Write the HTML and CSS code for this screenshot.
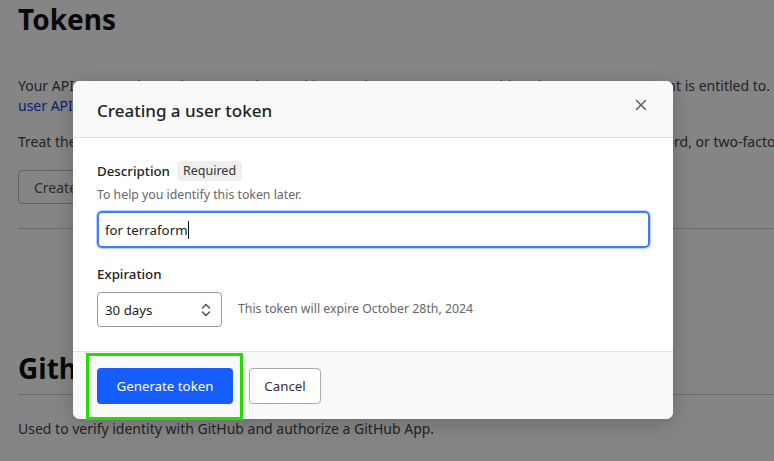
FILE: index.html
```html
<!DOCTYPE html>
<html>
<head>
<meta charset="utf-8">
<link rel="stylesheet" href="styles.css">
</head>
<body>
<main class="page">
  <h1 class="page-title">Tokens</h1>
  <p class="para">Your API access tokens give your scripts and integrations access to everything that your user account is entitled to. For more<br><a class="link" href="#">user API tokens</a>, see the documentation.</p>
  <p class="para">Treat these tokens very carefully, as you would treat any other secrets, such as your account password, or two-factor codes.</p>
  <button class="ghost-btn">Create a user token</button>
  <hr class="rule">
  <h2 class="section-title">Github Apps</h2>
  <hr class="rule rule-tight">
  <p class="para">Used to verify identity with GitHub and authorize a GitHub App.</p>
</main>

<div class="overlay"></div>

<section class="modal">
  <header class="modal-head">
    <h3 class="modal-title">Creating a user token</h3>
    <svg class="close" width="12" height="12" viewBox="0 0 12 12"><path d="M1.5 1.5 L10.5 10.5 M10.5 1.5 L1.5 10.5" stroke="#5c5c66" stroke-width="1.5" fill="none" stroke-linecap="round"/></svg>
  </header>
  <div class="modal-body">
    <div class="label-row">
      <span class="label">Description</span>
      <span class="badge">Required</span>
    </div>
    <div class="hint">To help you identify this token later.</div>
    <div class="input"><span>for terraform</span><span class="caret"></span></div>

    <div class="label exp-label">Expiration</div>
    <div class="exp-row">
      <div class="select">
        <span>30 days</span>
        <svg width="10" height="16" viewBox="0 0 10 16"><path d="M1.5 6 L5 2.5 L8.5 6 M1.5 10 L5 13.5 L8.5 10" stroke="#555" stroke-width="1.5" fill="none" stroke-linecap="round" stroke-linejoin="round"/></svg>
      </div>
      <span class="exp-text">This token will expire October 28th, 2024</span>
    </div>
  </div>
  <footer class="modal-foot">
    <button class="btn primary">Generate token</button>
    <button class="btn secondary">Cancel</button>
    <div class="highlight"></div>
  </footer>
</section>
</body>
</html>
```

FILE: styles.css
```css
* { box-sizing: border-box; }
html, body { margin: 0; padding: 0; }
body {
  width: 774px;
  height: 461px;
  overflow: hidden;
  background: #fff;
  font-family: "Noto Sans", "Open Sans", sans-serif;
  color: #222;
  position: relative;
}
.page {
  padding: 0 0 0 18px;
  white-space: nowrap;
  overflow: hidden;
  width: 774px;
  height: 461px;
}
.page-title {
  margin: 0;
  font-size: 28px;
  font-weight: 700;
  line-height: 38px;
  color: #111;
}
.para {
  margin: 0;
  font-size: 14px;
  line-height: 20px;
  color: #444;
}
.page-title + .para { margin-top: 38px; }
.para + .para { margin-top: 16px; }
.link { color: #1a3cdd; text-decoration: none; }
.ghost-btn {
  margin-top: 18px;
  height: 34px;
  padding: 0 15px;
  border: 1px solid #bbb;
  border-radius: 4px;
  background: #fff;
  color: #555;
  font: 14px "Noto Sans", sans-serif;
  display: block;
}
.rule {
  border: 0;
  border-top: 1px solid #ccc;
  margin: 24px 0 0 0;
}
.section-title {
  margin: 121px 0 0 0;
  font-size: 28px;
  line-height: 36px;
  font-weight: 700;
  color: #111;
}
.rule-tight { margin-top: 8px; }
.rule-tight + .para { margin-top: 24px; }

.overlay {
  position: absolute;
  inset: 0;
  background: rgba(0,0,0,0.48);
}

.modal {
  position: absolute;
  left: 73px;
  top: 81px;
  width: 600px;
  height: 338px;
  background: #fff;
  border-radius: 7px;
  display: flex;
  flex-direction: column;
  box-shadow: 0 4px 20px rgba(0,0,0,0.2);
}
.modal-head {
  height: 57px;
  background: #f9f9f9;
  border-bottom: 1px solid #dedede;
  border-radius: 7px 7px 0 0;
  display: flex;
  align-items: center;
  justify-content: space-between;
  padding: 0 26px 0 24px;
}
.modal-title {
  margin: 0;
  font-size: 17px;
  font-weight: 500;
  color: #222;
  padding-top: 2px;
}
.close { margin-top: -8px; }
.modal-body {
  padding: 23px 23px 0 24px;
  height: 213px;
}
.label-row {
  display: flex;
  align-items: center;
  gap: 7px;
}
.label {
  font-size: 13.3px;
  font-weight: 500;
  color: #222;
  line-height: 20px;
}
.badge {
  font-size: 12.5px;
  color: #333;
  background: #efefef;
  border-radius: 4px;
  padding: 0 6px;
  line-height: 20px;
}
.hint {
  font-size: 12.3px;
  color: #666;
  line-height: 18px;
  margin-top: 5px;
}
.input {
  margin-top: 7px;
  height: 37px;
  border: 2px solid #3d7cff;
  border-radius: 5px;
  box-shadow: 0 0 0 1px rgba(61,124,255,0.35);
  display: flex;
  align-items: center;
  padding-left: 6px;
  font-size: 13.3px;
  color: #222;
}
.caret {
  display: inline-block;
  width: 1px;
  height: 18px;
  background: #111;
}
.exp-label { margin-top: 16px; }
.exp-row {
  display: flex;
  align-items: center;
  gap: 16px;
  margin-top: 8px;
}
.select {
  width: 125px;
  height: 35px;
  border: 1px solid #999;
  border-radius: 4px;
  display: flex;
  align-items: center;
  justify-content: space-between;
  padding: 0 10px 0 7px;
  font-size: 13.3px;
  color: #222;
}
.exp-text {
  font-size: 12.3px;
  color: #666;
  margin-top: -2px;
}
.modal-foot {
  flex: 1;
  background: #f9f9f9;
  border-top: 1px solid #dedede;
  border-radius: 0 0 7px 7px;
  display: flex;
  align-items: flex-start;
  gap: 16px;
  padding: 16px 24px 0 24px;
  position: relative;
}
.btn {
  height: 36px;
  border-radius: 4px;
  font: 13.3px "Noto Sans", sans-serif;
  cursor: pointer;
}
.primary {
  width: 136px;
  background: #165dff;
  border: 0;
  color: #fff;
}
.secondary {
  width: 72px;
  background: #fff;
  border: 1px solid #aaa;
  color: #333;
}
.highlight {
  position: absolute;
  left: 13px;
  top: 1px;
  width: 157px;
  height: 67px;
  border: 3px solid #22dd00;
}
```
